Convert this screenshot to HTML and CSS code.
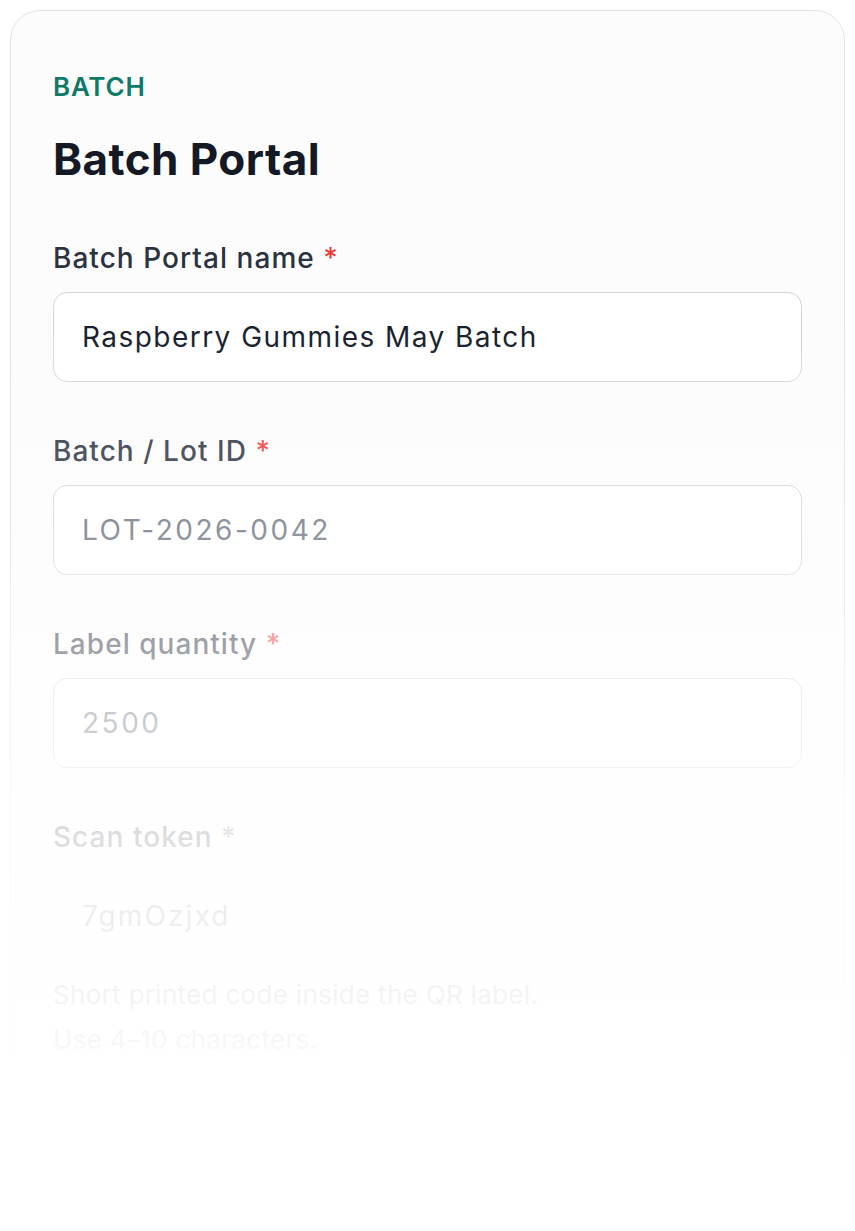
FILE: index.html
```html
<!DOCTYPE html>
<html lang="en">
<head>
<meta charset="utf-8">
<title>Batch Portal</title>
<link rel="stylesheet" href="styles.css">
</head>
<body>
  <main class="card">
    <p class="eyebrow">BATCH</p>
    <h1 class="title">Batch Portal</h1>
    <div class="fields">
      <div class="field">
        <div class="label">Batch Portal name <span class="req">*</span></div>
        <div class="input input-filled">Raspberry Gummies May Batch</div>
      </div>
      <div class="field">
        <div class="label">Batch / Lot ID <span class="req">*</span></div>
        <div class="input input-num">LOT-2026-0042</div>
      </div>
      <div class="field">
        <div class="label">Label quantity <span class="req">*</span></div>
        <div class="input input-num">2500</div>
      </div>
      <div class="field">
        <div class="label">Scan token <span class="req req-muted">*</span></div>
        <div class="input input-token input-faded">7gmOzjxd</div>
        <p class="help">Short printed code inside the QR label.<br>Use 4–10 characters.</p>
      </div>
    </div>
  </main>
  <div class="fade"></div>
</body>
</html>
```

FILE: styles.css
```css
html, body {
  margin: 0;
  padding: 0;
}

html {
  overflow: hidden;
}

body {
  position: relative;
  height: 1231px;
  box-sizing: border-box;
  padding: 10px 10px 0 10px;
  background: #ffffff;
  font-family: Inter, "Noto Sans", "Liberation Sans", sans-serif;
  color: #111827;
}

.card {
  box-sizing: border-box;
  min-height: 1180px;
  border: 1px solid #e2e3e7;
  border-radius: 30px;
  background: #fcfcfd;
  padding: 60px 42px 80px;
}

.eyebrow {
  margin: 0;
  font-size: 26px;
  line-height: 32px;
  font-weight: 600;
  letter-spacing: 0.03em;
  color: #0f7a67;
}

.title {
  margin: 30px 0 0;
  font-size: 44px;
  line-height: 52px;
  font-weight: 700;
  letter-spacing: 0.01em;
  color: #141925;
}

.fields {
  margin-top: 55px;
  display: flex;
  flex-direction: column;
  gap: 51px;
}

.field {
  display: flex;
  flex-direction: column;
}

.label {
  font-size: 28px;
  line-height: 36px;
  font-weight: 500;
  letter-spacing: 0.037em;
  color: #2b3240;
  margin-bottom: 16px;
}

.req {
  color: #ef3b3b;
}

.req-muted {
  color: #6b7280;
}

.input {
  box-sizing: border-box;
  height: 90px;
  border: 1px solid #d3d5db;
  border-radius: 14px;
  background: #ffffff;
  padding: 0 28px;
  display: flex;
  align-items: center;
  font-size: 28px;
  font-weight: 400;
  letter-spacing: 0.052em;
  color: #6b7280;
}

.input-filled {
  color: #111827;
}

.input-num {
  letter-spacing: 0.09em;
}

.input-token {
  letter-spacing: 0.075em;
}

.input-faded {
  border-color: transparent;
  background: transparent;
}

.help {
  margin: 11px 0 0;
  font-size: 26px;
  line-height: 45px;
  letter-spacing: 0.012em;
  color: #6b7280;
}

.fade {
  position: absolute;
  left: 0;
  top: 0;
  width: 100%;
  height: 1231px;
  pointer-events: none;
  background: linear-gradient(to bottom,
    rgba(255,255,255,0) 0px,
    rgba(255,255,255,0) 300px,
    rgba(255,255,255,0.17) 452px,
    rgba(255,255,255,0.23) 530px,
    rgba(255,255,255,0.54) 643px,
    rgba(255,255,255,0.64) 723px,
    rgba(255,255,255,0.84) 838px,
    rgba(255,255,255,0.88) 915px,
    rgba(255,255,255,0.92) 1000px,
    rgba(255,255,255,0.95) 1045px,
    rgba(255,255,255,1) 1110px,
    rgba(255,255,255,1) 1231px);
}
```
